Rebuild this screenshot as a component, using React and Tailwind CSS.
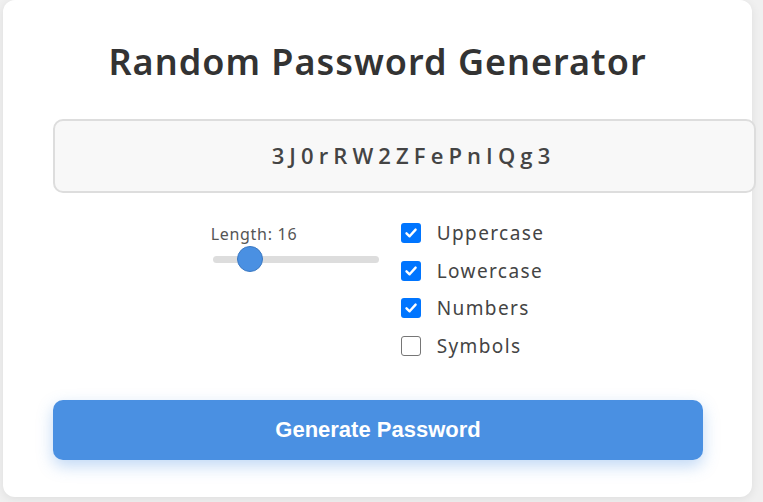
import { useState } from 'react'

const options = [
  { name: 'Uppercase', checked: true },
  { name: 'Lowercase', checked: true },
  { name: 'Numbers', checked: true },
  { name: 'Symbols', checked: false },
]

function Checkbox({ checked }) {
  if (!checked) {
    return <span className="block h-[20px] w-[20px] rounded-[3px] border border-[#767676] bg-white" />
  }
  return (
    <span className="flex h-[20px] w-[20px] items-center justify-center rounded-[3px] bg-[#0075ff]">
      <svg width="14" height="14" viewBox="0 0 14 14" fill="none">
        <path d="M2.5 7.3 L5.6 10.3 L11.6 3.6" stroke="#fff" strokeWidth="2.4" strokeLinecap="round" strokeLinejoin="round" />
      </svg>
    </span>
  )
}

export default function App() {
  const [length] = useState(16)
  const pct = (length - 8) / (64 - 8)

  return (
    <div className="h-[502px] w-[763px] overflow-hidden bg-[#f0f0f0]" style={{ fontFamily: '"Noto Sans", Lato, sans-serif' }}>
      <div className="ml-[3px] h-[497px] w-[749px] rounded-[12px] bg-white px-[50px] pt-[35px] shadow-[0_2px_10px_rgba(0,0,0,0.08)]">
        <h1 className="text-center text-[36px] font-semibold leading-[54px] tracking-[1px] text-[#333]">Random Password Generator</h1>

        <div
          className="mt-[30px] flex h-[74px] w-[703px] items-center justify-center rounded-[10px] border-2 border-[#ddd] bg-[#f8f8f8] pb-[2px] pl-[18px] text-[22px] font-semibold tracking-[5.1px] text-[#444]"
          style={{ fontFamily: '"Open Sans", sans-serif' }}
        >
          3J0rRW2ZFePnIQg3
        </div>

        <div className="mt-[30px] flex items-start justify-center gap-[22px]">
          <div className="flex w-[168px] flex-col pt-[1px]">
            <span className="text-[16px] leading-[20px] tracking-[0.7px] text-[#555]">Length: {length}</span>
            <div className="relative ml-[2px] mt-[12px] h-[7px] w-[166px] rounded-full bg-[#ddd]">
              <span
                className="absolute top-[-10px] h-[26px] w-[26px] -translate-x-1/2 rounded-full border border-[#3a78c2] bg-[#4a90e2]"
                style={{ left: `${17 + pct * 140}px` }}
              />
            </div>
          </div>

          <div className="flex flex-col gap-[17.5px]">
            {options.map((o) => (
              <label key={o.name} className="flex h-[20px] items-center gap-[16px]">
                <Checkbox checked={o.checked} />
                <span className="text-[19px] leading-[20px] tracking-[1.4px] text-[#444]">{o.name}</span>
              </label>
            ))}
          </div>
        </div>

        <button className="mt-[44px] flex h-[60px] w-[650px] items-center justify-center rounded-[10px] bg-[#4a90e2] text-[22px] font-bold text-white shadow-[0_6px_16px_rgba(74,144,226,0.35)]" style={{ fontFamily: '"Liberation Sans", Arial, sans-serif' }}>
          Generate Password
        </button>
      </div>
    </div>
  )
}
